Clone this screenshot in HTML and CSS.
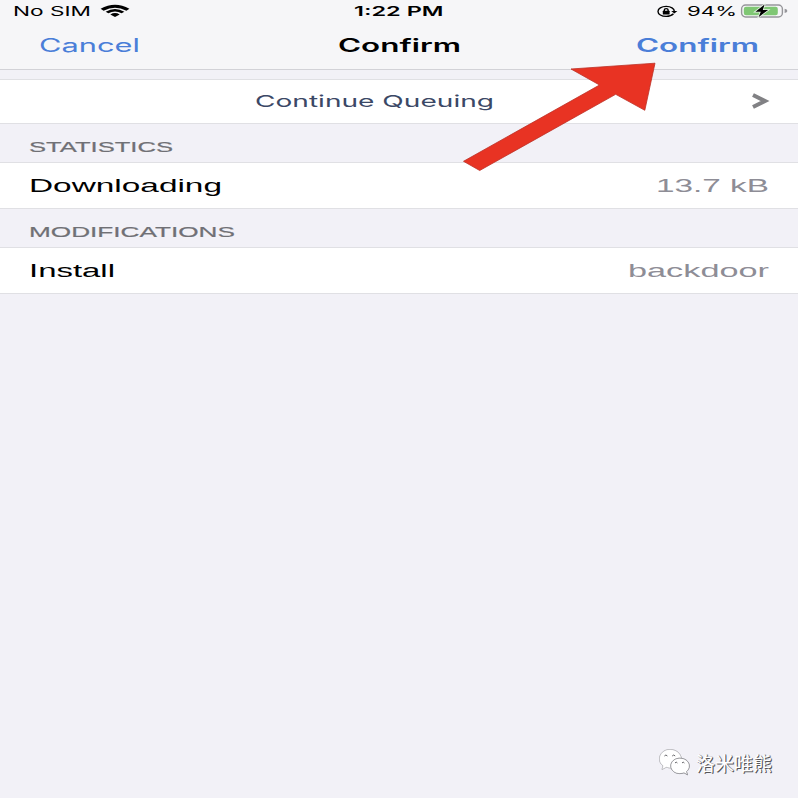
FILE: index.html
```
<!DOCTYPE html>
<html lang="en">
<head>
<meta charset="utf-8">
<title>Confirm</title>
<link rel="stylesheet" href="styles.css">
</head>
<body>
<main class="screen">
  <header class="top">
    <div class="status">
      <div class="side">
        <svg class="ui" width="78" height="22"><text x="0" y="16" textLength="78" lengthAdjust="spacingAndGlyphs">No SIM</text></svg>
        <svg class="wifi" width="30" height="22" viewBox="0 0 30 22">
          <path d="M.6 8.800Q15 .6 29.400 8.800L26.400 10.700Q15 4.700 3.600 10.700Z"/>
          <path d="M5.600 11.800Q15 6.400 24.400 11.800L21.600 13.300Q15 9.700 8.400 13.300Z"/>
          <path d="M10.300 14.400Q15 11.700 19.700 14.400L15 17Z"/>
        </svg>
      </div>
      <svg class="ui semi" width="90" height="22"><text x="-2" y="16" textLength="89.500" lengthAdjust="spacingAndGlyphs">1:22 PM</text></svg>
      <div class="side end">
        <svg class="lock" width="22" height="22" viewBox="0 0 22 22">
          <path class="ring" d="M17.5 13.8Q15 16.4 10.2 16.4C5.5 16.4 2 14.3 2 11.4S5.5 6.4 10.2 6.4S18.3 8.5 18.3 11.3"/>
          <path d="M15.2 10.9H21.4L18.3 13.5Z"/>
          <rect x="6.8" y="10.7" width="6.8" height="3.8" rx=".5"/>
          <path class="shackle" d="M8.3 11V9.9Q8.3 8.6 10.2 8.6T12.1 9.9V11"/>
        </svg>
        <svg class="ui" width="50" height="22"><text x="0" y="16" textLength="50" lengthAdjust="spacingAndGlyphs">94%</text></svg>
        <svg class="battery" width="48" height="22" viewBox="0 0 48 22">
          <rect class="shell" x="1.6" y="5" width="40.8" height="12" rx="4"/>
          <rect class="charge" x="3.800" y="6.800" width="34" height="8.400" rx="2.2"/>
          <path class="cap" d="M44.6 8.8Q47.4 9.3 47.4 10.9T44.6 13Z"/>
          <path class="bolt" d="M24.6 4.600L15.400 11.700H20.800L18.500 17.200L28.100 10H22.800Z"/>
        </svg>
      </div>
    </div>
    <nav class="nav">
      <svg class="ui blue" width="101" height="30"><text x="0" y="22" textLength="101" lengthAdjust="spacingAndGlyphs">Cancel</text></svg>
      <svg class="ui semi" width="124" height="30"><text x="0" y="22" textLength="123" lengthAdjust="spacingAndGlyphs">Confirm</text></svg>
      <svg class="ui semi blue" width="124" height="30"><text x="0" y="22" textLength="123" lengthAdjust="spacingAndGlyphs">Confirm</text></svg>
    </nav>
  </header>
  <section class="row queue">
    <svg class="ui link" width="240" height="30"><text x="0" y="18.500" textLength="239" lengthAdjust="spacingAndGlyphs">Continue Queuing</text></svg>
    <svg class="chevron" width="18" height="16" viewBox="0 0 18 16"><path d="M2 2L14 8L2 14"/></svg>
  </section>
  <h2 class="head"><svg width="146" height="24"><text x="0" y="18" textLength="144" lengthAdjust="spacingAndGlyphs">STATISTICS</text></svg></h2>
  <section class="row">
    <svg width="194" height="30"><text x="0" y="21" textLength="193" lengthAdjust="spacingAndGlyphs">Downloading</text></svg>
    <svg class="value" width="112" height="30"><text x="-1" y="21" textLength="113" lengthAdjust="spacingAndGlyphs">13.7 kB</text></svg>
  </section>
  <h2 class="head"><svg width="208" height="24"><text x="0" y="18" textLength="206" lengthAdjust="spacingAndGlyphs">MODIFICATIONS</text></svg></h2>
  <section class="row">
    <svg width="88" height="30"><text x="0" y="21" textLength="86" lengthAdjust="spacingAndGlyphs">Install</text></svg>
    <svg class="value" width="141" height="30"><text x="0" y="21" textLength="141" lengthAdjust="spacingAndGlyphs">backdoor</text></svg>
  </section>
  <svg class="arrow" width="200" height="116" viewBox="460 60 200 116"><path d="M571 69L655 63.2L644.8 110.3L615.7 94.3L479.7 170.5L463.5 161.3L599.5 85Z"/></svg>
  <footer class="mark">
    <svg width="34" height="30" viewBox="0 0 34 30">
      <path class="shade" d="M12 1.500C5.500 1.500 1.500 6 1.500 11c0 3 1.400 5.200 3.600 6.800L4 21.500l4.300-2.300c4 1.400 7 .8 9.600-.8 4-2 6-4 5.500-8C22.500 5 18 1.500 12 1.500Z"/>
      <path class="shade front" d="M21.800 10.200c-5 0-9 3.300-9 7.700s4 7.700 9 7.700c1.500 0 3-.3 4.200-.8l3.500 2-1-3.200c1.700-1.400 2.800-3.300 2.800-5.700 0-4.400-4.200-7.700-9.500-7.700Z"/>
      <path class="eyes" d="M6.400 8q1.500-2 3 0M14.200 8q1.500-2 3 0M17 15q1.200-1.800 2.400 0M24 15q1.200-1.800 2.400 0"/>
    </svg>
    <span lang="zh">洛米唯熊</span>
  </footer>
</main>
</body>
</html>
```
FILE: styles.css
```
* { box-sizing: border-box; }
body { margin: 0; }
.screen {
  position: relative;
  display: flex;
  flex-direction: column;
  width: 798px;
  height: 798px;
  overflow: hidden;
  background: #f2f1f7;
  font-family: "Liberation Sans", sans-serif;
}
svg { display: block; flex: none; overflow: visible; }
.ui { font-family: Inter, sans-serif; }
.semi { font-weight: 600; }
.top {
  height: 70px;
  margin-bottom: 9px;
  background: #f6f6f8;
  border-bottom: 1px solid #d2d2d7;
}
.status {
  display: grid;
  grid-template-columns: 1fr 90px 1fr;
  height: 22px;
  padding: 0 10px 0 13px;
  font-size: 13.2px;
}
.side { display: flex; gap: 9px; }
.end { justify-content: flex-end; gap: 9px; }
.end .battery { margin-left: -6px; }
.ring, .shackle { fill: none; stroke: #000; stroke-width: 1.4; }
.shell { fill: #f6f6f8; stroke: #96969a; stroke-width: 1.4; }
.charge { fill: #7fc774; }
.cap { fill: #96969a; }
.bolt { stroke: #e9f4e8; stroke-width: 1.6; paint-order: stroke; }
.nav {
  display: grid;
  grid-template-columns: 1fr 124px 1fr;
  padding: 8px 38px 0 39px;
  font-size: 18px;
}
.nav svg:last-child { justify-self: end; }
.blue { fill: #4a7ed8; }
.row {
  display: flex;
  justify-content: space-between;
  align-items: flex-start;
  height: 47px;
  padding: 8px 29px 0;
  background: #fff;
  border-top: 1px solid #e0e0e4;
  border-bottom: 1px solid #e0e0e4;
  font-size: 18px;
}
.queue {
  height: 45px;
  padding-left: 255px;
  font-size: 16.5px;
}
.link { fill: #3b4866; }
.chevron { margin-top: 5px; }
.chevron path { fill: none; stroke: #818184; stroke-width: 4; }
.value { fill: #8e8d96; }
.head {
  height: 38px;
  margin: 0;
  padding: 10px 29px 0;
  font-size: 15.5px;
  font-weight: 400;
  fill: #707075;
  stroke: #707075;
  stroke-width: .2;
}
.arrow { position: absolute; left: 460px; top: 60px; fill: #e83323; stroke: #bd3026; stroke-width: .8; }
.mark {
  display: flex;
  align-items: center;
  gap: 4px;
  margin: auto 26px 20px auto;
  color: #fff;
  font: 19px/30px "Noto Sans CJK SC", sans-serif;
  text-shadow: 1px 1px 0 #55555a, 1px 0 0 #88888c;
}
.shade { fill: #fff; stroke: #c6c6cb; stroke-width: .5; filter: drop-shadow(.5px .7px 0 #707075); }
.front { stroke: #77777c; }
.eyes { fill: none; stroke: #66666a; stroke-width: 1; }
```
